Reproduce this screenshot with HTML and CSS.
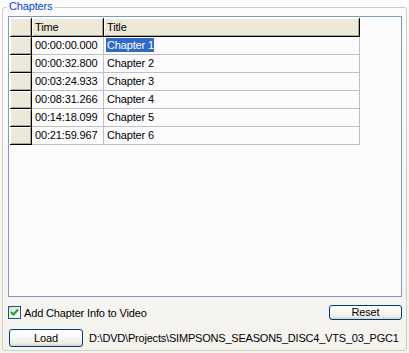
FILE: index.html
```html
<!DOCTYPE html>
<html>
<head>
<meta charset="utf-8">
<link rel="stylesheet" href="styles.css">
</head>
<body>
<div class="group">
  <span class="legend">Chapters</span>
  <div class="grid">
    <div class="row head">
      <div class="rh"></div>
      <div class="c time">Time</div>
      <div class="c title">Title</div>
    </div>
    <div class="row">
      <div class="rh"></div>
      <div class="c time">00:00:00.000</div>
      <div class="c title"><span class="sel">Chapter 1</span></div>
    </div>
    <div class="row">
      <div class="rh"></div>
      <div class="c time">00:00:32.800</div>
      <div class="c title">Chapter 2</div>
    </div>
    <div class="row">
      <div class="rh"></div>
      <div class="c time">00:03:24.933</div>
      <div class="c title">Chapter 3</div>
    </div>
    <div class="row">
      <div class="rh"></div>
      <div class="c time">00:08:31.266</div>
      <div class="c title">Chapter 4</div>
    </div>
    <div class="row">
      <div class="rh"></div>
      <div class="c time">00:14:18.099</div>
      <div class="c title">Chapter 5</div>
    </div>
    <div class="row">
      <div class="rh"></div>
      <div class="c time">00:21:59.967</div>
      <div class="c title">Chapter 6</div>
    </div>
  </div>
  <div class="opts">
    <label class="check">
      <span class="box"><svg width="9" height="9" viewBox="0 0 9 9"><path d="M1 4 L3.5 6.5 L8 1.5" fill="none" stroke="#21A121" stroke-width="2"/></svg></span>
      <span>Add Chapter Info to Video</span>
    </label>
    <button class="btn reset">Reset</button>
  </div>
  <div class="loadrow">
    <button class="btn load">Load</button>
    <span class="path">D:\DVD\Projects\SIMPSONS_SEASON5_DISC4_VTS_03_PGC1</span>
  </div>
</div>
</body>
</html>
```
FILE: styles.css
```css
html, body {
  margin: 0;
  padding: 0;
}
body {
  width: 409px;
  height: 353px;
  background: linear-gradient(#FCFCFE, #F4F3EE);
  font-family: "Liberation Sans", Arial, sans-serif;
  font-size: 11px;
  letter-spacing: -0.15px;
  color: #000;
  overflow: hidden;
}
.group {
  position: relative;
  box-sizing: border-box;
  margin: 7px 2px 0 2px;
  height: 344px;
  border: 1px solid #D0D0BF;
  border-radius: 3px;
  padding: 8px 4px 0 5px;
  display: flex;
  flex-direction: column;
}
.legend {
  position: absolute;
  left: 4px;
  top: -8px;
  padding: 0 2px 0 2px;
  background: #FCFCFE;
  color: #0046D5;
  line-height: 13px;
}
.grid {
  box-sizing: border-box;
  height: 281px;
  border: 1px solid #7F9DB9;
  background: #FCFCFE;
  padding: 1px 0 0 1px;
}
.row {
  display: flex;
  height: 18px;
}
.row.head {
  height: 19px;
}
.rh {
  box-sizing: border-box;
  width: 22px;
  background: #ECE9D8;
  border-right: 1px solid #000;
  border-bottom: 1px solid #000;
  box-shadow: inset 1px 1px #fff, inset -1px -1px #ACA899;
}
.c {
  box-sizing: border-box;
  border-right: 1px solid #C0C0C0;
  border-bottom: 1px solid #C0C0C0;
  padding-left: 3px;
  line-height: 17px;
  white-space: nowrap;
}
.time { width: 72px; }
.title { width: 256px; }
.head .c {
  background: #ECE9D8;
  border-right: 1px solid #000;
  border-bottom: 1px solid #000;
  box-shadow: inset 1px 1px #fff, inset -1px -1px #ACA899;
  line-height: 18px;
}
.head .rh {
  height: 19px;
}
.sel {
  background: #316AC5;
  color: #fff;
  padding: 1px 0;
  margin-left: -1px;
  padding-left: 1px;
}
.opts {
  margin-top: 8px;
  height: 15px;
  display: flex;
  align-items: center;
  justify-content: space-between;
}
.check {
  display: flex;
  align-items: center;
  gap: 3px;
}
.box {
  box-sizing: border-box;
  width: 13px;
  height: 13px;
  border: 1px solid #1C5180;
  background: linear-gradient(135deg, #DCDCD7, #FFFFFF);
  display: flex;
  align-items: center;
  justify-content: center;
}
.box svg { display: block; }
.btn {
  box-sizing: border-box;
  flex: none;
  font-family: inherit;
  font-size: 11px;
  letter-spacing: inherit;
  color: #000;
  border: 1px solid #003C74;
  border-radius: 3px;
  background: linear-gradient(#FFFFFF, #F0F0EA 80%, #D6D0C5);
  padding: 0;
  margin: 0;
}
.reset {
  width: 73px;
  height: 15px;
  line-height: 13px;
}
.loadrow {
  margin-top: 9px;
  display: flex;
  align-items: center;
  gap: 6px;
  margin-left: 1px;
}
.load {
  width: 74px;
  height: 18px;
}
.path {
  flex: none;
  white-space: nowrap;
  letter-spacing: -0.2px;
}
```
